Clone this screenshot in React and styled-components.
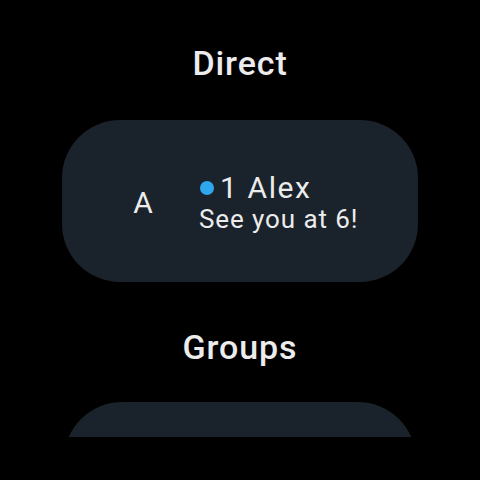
import React from 'react'
import styled, { createGlobalStyle } from 'styled-components'

const GlobalStyle = createGlobalStyle`
  html, body {
    margin: 0;
    padding: 0;
    background: #000;
  }
  body {
    font-family: Roboto, 'Noto Sans', sans-serif;
    -webkit-font-smoothing: antialiased;
  }
`

const Screen = styled.div`
  width: 480px;
  height: 480px;
  background: #000;
  overflow: hidden;
`

const List = styled.div`
  height: 437px;
  overflow: hidden;
  display: flex;
  flex-direction: column;
  align-items: center;
`

const SectionTitle = styled.h2`
  flex-shrink: 0;
  margin: 0;
  height: 120px;
  padding-top: ${p => p.top}px;
  box-sizing: border-box;
  font-size: 34px;
  line-height: 40px;
  font-weight: 500;
  color: #ececec;
  letter-spacing: 0.9px;
  text-align: center;
`

const Chip = styled.div`
  flex-shrink: 0;
  width: ${p => p.w}px;
  height: 162px;
  border-radius: 58px;
  background: #1a222b;
  display: flex;
  align-items: center;
  box-sizing: border-box;
  padding-left: 61px;
  gap: 36px;
`

const Avatar = styled.div`
  width: 40px;
  text-align: center;
  font-size: 30px;
  line-height: 32px;
  color: #ececec;
  padding-top: 3px;
`

const Body = styled.div`
  display: flex;
  flex-direction: column;
  padding-top: 4px;
`

const Name = styled.div`
  display: flex;
  align-items: center;
  font-size: 30px;
  line-height: 32px;
  color: #ececec;
  letter-spacing: 1.6px;
`

const Dot = styled.span`
  width: 14px;
  height: 14px;
  border-radius: 50%;
  background: #2ea7ee;
  margin: 1px 6px 0 1px;
`

const Preview = styled.div`
  font-size: 26px;
  line-height: 31px;
  color: #ececec;
  letter-spacing: 0.9px;
`

export default function App() {
  return (
    <Screen>
      <GlobalStyle />
      <List>
        <SectionTitle top={43}>Direct</SectionTitle>
        <Chip w={356}>
          <Avatar>A</Avatar>
          <Body>
            <Name>
              <Dot />1 Alex
            </Name>
            <Preview>See you at 6!</Preview>
          </Body>
        </Chip>
        <SectionTitle top={45}>Groups</SectionTitle>
        <Chip w={352} />
      </List>
    </Screen>
  )
}
